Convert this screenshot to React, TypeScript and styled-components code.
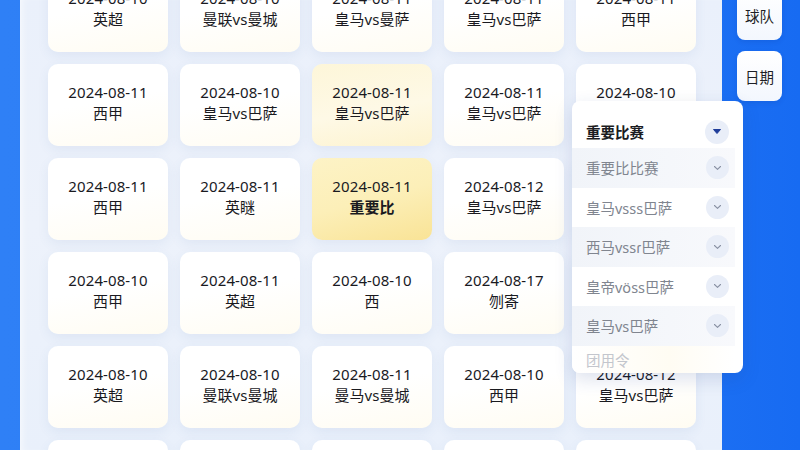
import React from "react";
import styled, { createGlobalStyle, css } from "styled-components";

const Global = createGlobalStyle`
  html, body { margin: 0; padding: 0; }
  body {
    width: 800px; height: 450px; overflow: hidden;
    font-family: "Noto Sans", "Noto Sans CJK SC", sans-serif;
    background: #1f70f3;
  }
`;

const Page = styled.div`
  position: relative;
  display: flex;
  width: 800px;
  height: 450px;
  overflow: hidden;
  background: linear-gradient(90deg, #2f80f6 0%, #2a7cf5 50%, #176bf2 100%);
`;

const LeftStrip = styled.div`
  width: 20px;
  flex: none;
`;

const Main = styled.main`
  width: 702px;
  flex: none;
  height: 100%;
  overflow: hidden;
  background: linear-gradient(180deg, #eaf0fb 0%, #edf2fb 50%, #e9f0fb 100%);
  box-shadow: inset 6px 0 10px -6px rgba(255, 255, 255, 0.9);
`;

const Grid = styled.div`
  display: grid;
  grid-template-columns: repeat(5, 120px);
  grid-auto-rows: 82px;
  gap: 12px;
  padding-left: 28px;
  margin-top: -30px;
`;

type Tone = "plain" | "soft" | "strong";

const Card = styled.div<{ $tone: Tone }>`
  border-radius: 10px;
  display: flex;
  flex-direction: column;
  align-items: center;
  justify-content: center;
  padding-bottom: 5px;
  box-sizing: border-box;
  color: #1a1a1f;
  font-size: 15px;
  line-height: 21px;
  box-shadow: 0 4px 12px rgba(70, 100, 170, 0.08);
  ${(p) =>
    p.$tone === "plain" &&
    css`
      background: linear-gradient(170deg, #ffffff 0%, #ffffff 45%, #fffcf2 100%);
    `}
  ${(p) =>
    p.$tone === "soft" &&
    css`
      background: linear-gradient(170deg, #fdf6d9 0%, #fef9e6 55%, #fdf3cf 100%);
    `}
  ${(p) =>
    p.$tone === "strong" &&
    css`
      background: linear-gradient(165deg, #fdf3c6 0%, #fcefb8 50%, #f9e396 100%);
    `}
`;

const DateText = styled.span`
  letter-spacing: 0.1px;
`;

const NameText = styled.span<{ $bold?: boolean }>`
  font-weight: ${(p) => (p.$bold ? 700 : 400)};
`;

const Side = styled.aside`
  display: flex;
  flex-direction: column;
  gap: 11px;
  padding-left: 15px;
  margin-top: -10px;
`;

const SideButton = styled.button`
  width: 45px;
  height: 50px;
  border: none;
  border-radius: 8px;
  background: linear-gradient(180deg, #ffffff 0%, #f3f7fe 100%);
  box-shadow: 0 2px 5px rgba(10, 40, 120, 0.12);
  font-family: "Noto Sans", "Noto Sans CJK SC", sans-serif;
  font-size: 14.5px;
  color: #1d1f26;
  padding: 0;
`;

const Dropdown = styled.div`
  position: absolute;
  left: 572px;
  top: 101px;
  width: 171px;
  height: 272px;
  overflow: hidden;
  background: #ffffff;
  border-radius: 8px;
  box-shadow: 0 6px 18px rgba(40, 70, 140, 0.16);
  display: flex;
  flex-direction: column;
`;

const DropHeader = styled.div`
  height: 33px;
  padding: 14px 14px 0 14px;
  flex: none;
  display: flex;
  align-items: center;
  justify-content: space-between;
  font-size: 14.5px;
  font-weight: 700;
  color: #1b1c22;
`;

const DropItem = styled.div<{ $shade: boolean; $faded?: boolean }>`
  height: 39.5px;
  flex: none;
  box-sizing: border-box;
  display: flex;
  align-items: center;
  justify-content: space-between;
  margin-right: 8px;
  padding: 0 6px ${(p) => (p.$faded ? 12 : 0)}px 14px;
  font-size: 14.5px;
  color: ${(p) => (p.$faded ? "#c3c6cd" : "#80858f")};
  background: ${(p) =>
    p.$shade
      ? "linear-gradient(90deg, #f1f4f9 0%, #f5f7fb 60%, #f8f9fc 100%)"
      : p.$faded
      ? "linear-gradient(90deg, #ffffff 0%, #fffcf3 60%, #ffffff 100%)"
      : "#ffffff"};
`;

const Chevron = styled.span<{ $big?: boolean }>`
  width: ${(p) => (p.$big ? 24 : 23)}px;
  height: ${(p) => (p.$big ? 24 : 23)}px;
  border-radius: 50%;
  background: #e9eef8;
  display: flex;
  align-items: center;
  justify-content: center;
  flex: none;
`;

const cards: { d: string; n: string; t?: Tone; b?: boolean }[] = [
  { d: "2024-08-10", n: "英超" },
  { d: "2024-08-10", n: "曼联vs曼城" },
  { d: "2024-08-11", n: "皇马vs曼萨" },
  { d: "2024-08-11", n: "皇马vs巴萨" },
  { d: "2024-08-11", n: "西甲" },

  { d: "2024-08-11", n: "西甲" },
  { d: "2024-08-10", n: "皇马vs巴萨" },
  { d: "2024-08-11", n: "皇马vs巴萨", t: "soft" },
  { d: "2024-08-11", n: "皇马vs巴萨" },
  { d: "2024-08-10", n: "西甲" },

  { d: "2024-08-11", n: "西甲" },
  { d: "2024-08-11", n: "英瞇" },
  { d: "2024-08-11", n: "重要比", t: "strong", b: true },
  { d: "2024-08-12", n: "皇马vs巴萨" },
  { d: "2024-08-11", n: "英超" },

  { d: "2024-08-10", n: "西甲" },
  { d: "2024-08-11", n: "英超" },
  { d: "2024-08-10", n: "西" },
  { d: "2024-08-17", n: "刎寄" },
  { d: "2024-08-10", n: "西甲" },

  { d: "2024-08-10", n: "英超" },
  { d: "2024-08-10", n: "曼联vs曼城" },
  { d: "2024-08-11", n: "曼马vs曼城" },
  { d: "2024-08-10", n: "西甲" },
  { d: "2024-08-12", n: "皇马vs巴萨" },

  { d: "2024-08-10", n: "英超" },
  { d: "2024-08-11", n: "西甲" },
  { d: "2024-08-10", n: "英超" },
  { d: "2024-08-11", n: "西甲" },
  { d: "2024-08-10", n: "英超" },
];

const items = [
  { label: "重要比比赛", shade: true },
  { label: "皇马vsss巴萨", shade: false },
  { label: "西马vssɾ巴萨", shade: true },
  { label: "皇帝vöss巴萨", shade: false },
  { label: "皇马vs巴萨", shade: true },
];

const CaretFilled = () => (
  <svg width="10" height="7" viewBox="0 0 10 7">
    <path d="M1.5 1.5 L8.5 1.5 L5 5.5 Z" fill="#1f3c99" stroke="#1f3c99" strokeWidth="1" strokeLinejoin="round" />
  </svg>
);

const CaretLine = () => (
  <svg width="9" height="6" viewBox="0 0 9 6">
    <path d="M1.5 1.5 L4.5 4.3 L7.5 1.5" fill="none" stroke="#8a92a4" strokeWidth="1.1" strokeLinecap="round" strokeLinejoin="round" />
  </svg>
);

export default function App() {
  return (
    <>
      <Global />
      <Page>
        <LeftStrip />
        <Main>
          <Grid>
            {cards.map((c, i) => (
              <Card key={i} $tone={c.t ?? "plain"}>
                <DateText>{c.d}</DateText>
                <NameText $bold={c.b}>{c.n}</NameText>
              </Card>
            ))}
          </Grid>
        </Main>
        <Side>
          <SideButton>球队</SideButton>
          <SideButton>日期</SideButton>
        </Side>
        <Dropdown>
          <DropHeader>
            <span>重要比赛</span>
            <Chevron $big>
              <CaretFilled />
            </Chevron>
          </DropHeader>
          {items.map((it, i) => (
            <DropItem key={i} $shade={it.shade}>
              <span>{it.label}</span>
              <Chevron>
                <CaretLine />
              </Chevron>
            </DropItem>
          ))}
          <DropItem $shade={false} $faded>
            <span>团用令</span>
          </DropItem>
        </Dropdown>
      </Page>
    </>
  );
}
